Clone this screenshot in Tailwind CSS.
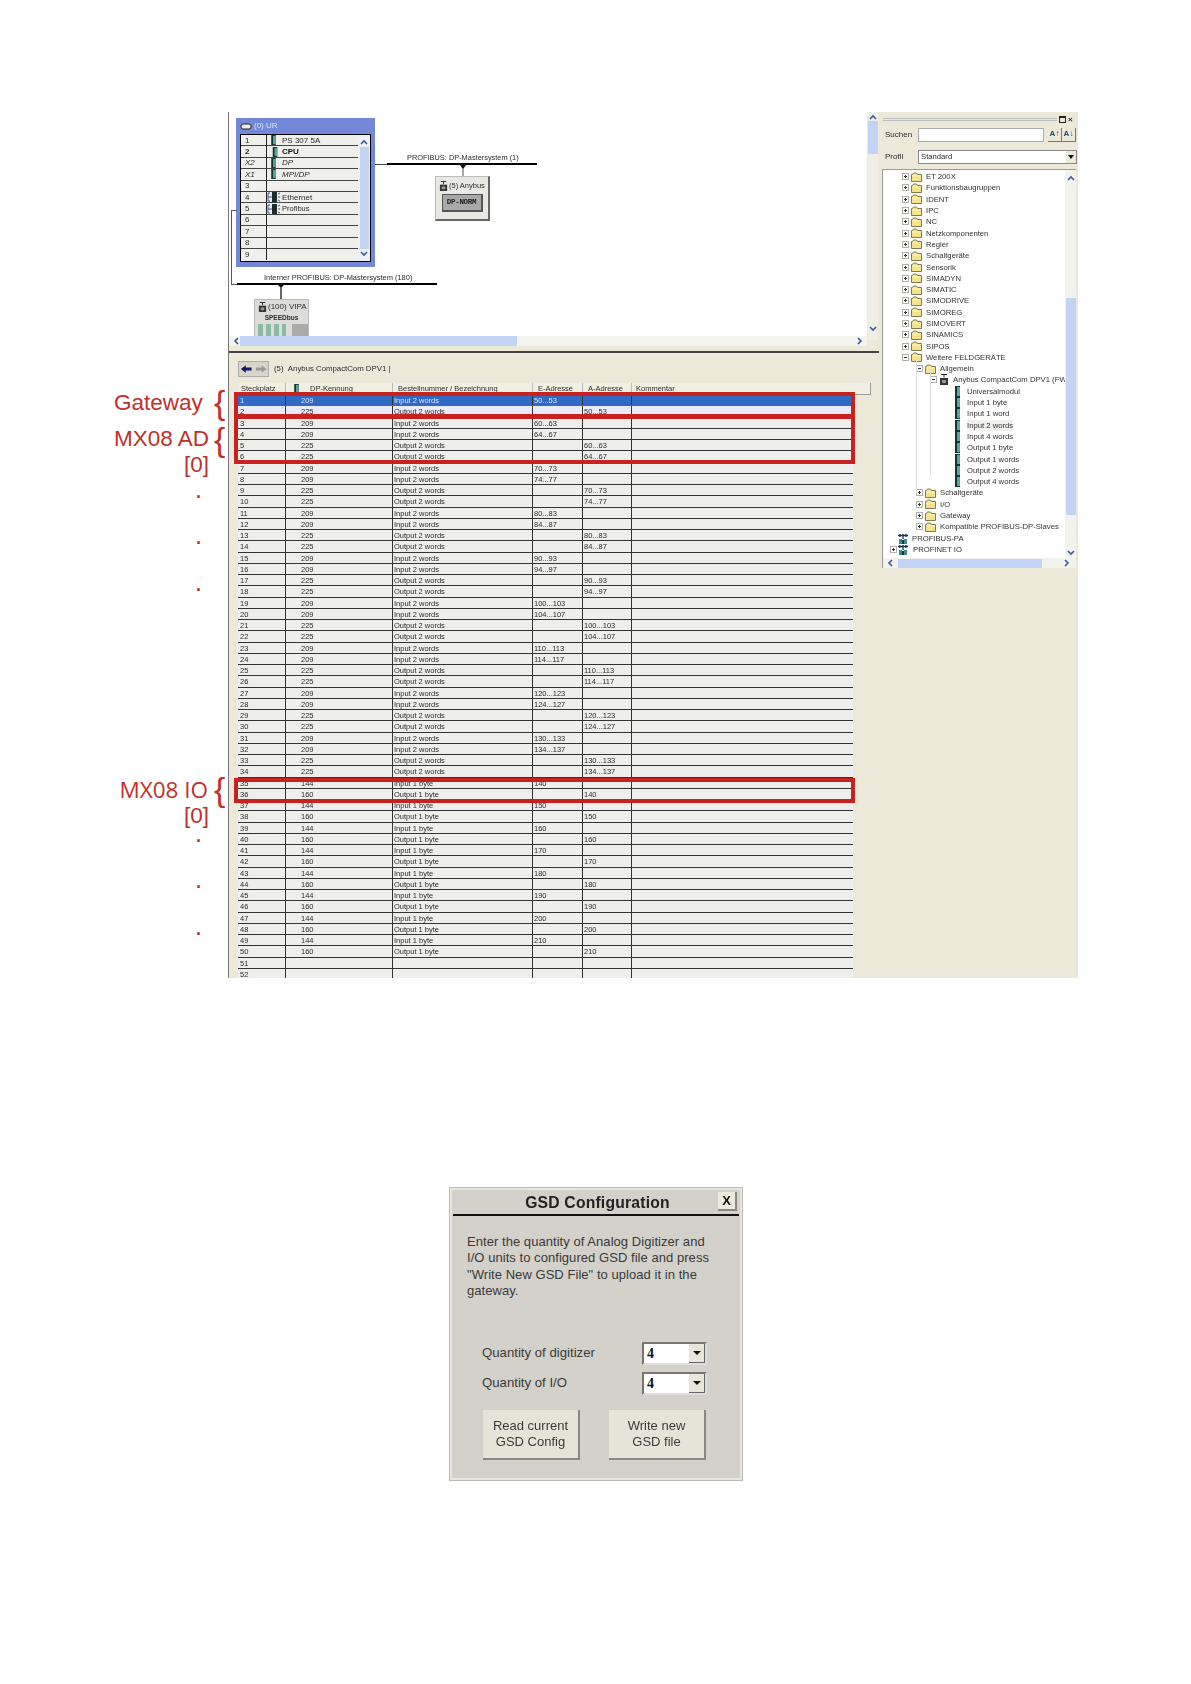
<!DOCTYPE html>
<html lang="de">
<head>
<meta charset="utf-8">
<title>GSD Configuration</title>
<script src="https://cdn.jsdelivr.net/npm/@tailwindcss/browser@4"></script>
</head>
<body class="bg-white">
<svg class="hidden" width="0" height="0">
  <symbol id="folder" viewBox="0 0 11 10"><path d="M.5 2.5h1l1-1.500h3l1 1.500h4v7h-10z" fill="#f4e38a" stroke="#7d7a55"/><path d="M1.500 4h8" stroke="#fdf6c4"/></symbol>
  <symbol id="plus" viewBox="0 0 7 7"><rect x=".5" y=".5" width="6" height="6" fill="#fff" stroke="#b0b0a8"/><path d="M2 3.500h3M3.500 2v3" stroke="#333"/></symbol>
  <symbol id="minus" viewBox="0 0 7 7"><rect x=".5" y=".5" width="6" height="6" fill="#fff" stroke="#b0b0a8"/><path d="M2 3.500h3" stroke="#333"/></symbol>
  <symbol id="module" viewBox="0 0 5 11"><rect width="5" height="11" fill="#123533"/><rect x="2" y="1" width="3" height="9" fill="#5da596"/></symbol>
  <symbol id="port" viewBox="0 0 14 10"><path d="M3 1H1v8h2M1 5h4" fill="none" stroke="#3a57a8"/><rect x="5" width="5" height="10" fill="#1c2b30"/><path d="M11 2l2-1M11 5h2M11 8l2 1" stroke="#555"/></symbol>
  <symbol id="slave" viewBox="0 0 10 11"><path d="M2 .5h6M5 .5v3" stroke="#222"/><rect x="1" y="4" width="8" height="7" fill="#333"/><rect x="3" y="6" width="4" height="3" fill="#999"/></symbol>
  <symbol id="net" viewBox="0 0 10 11"><path d="M0 2.500h10M2 1v3M5 1v3M8 1v3M5 4v2" stroke="#16325c" stroke-width="1.300"/><rect x="1" y="6" width="3" height="5" fill="#3a8f80"/><rect x="6" y="6" width="3" height="5" fill="#3a8f80"/><rect x="4" y="7" width="2" height="4" fill="#1c2f52"/></symbol>
  <symbol id="up" viewBox="0 0 8 6"><path d="M1 5l3-3 3 3" fill="none" stroke="#3d5a9c" stroke-width="1.600"/></symbol>
  <symbol id="down" viewBox="0 0 8 6"><path d="M1 1l3 3 3-3" fill="none" stroke="#3d5a9c" stroke-width="1.600"/></symbol>
  <symbol id="left" viewBox="0 0 6 8"><path d="M5 1L2 4l3 3" fill="none" stroke="#3d5a9c" stroke-width="1.600"/></symbol>
  <symbol id="right" viewBox="0 0 6 8"><path d="M1 1l3 3-3 3" fill="none" stroke="#3d5a9c" stroke-width="1.600"/></symbol>
</svg>

<div class="relative w-[1191px] h-[1684px] pt-[112px] overflow-hidden font-['Liberation_Sans',Arial,sans-serif]">

  <!-- screenshot -->
  <div class="relative ml-[228px] w-[850px] h-[866px] flex bg-[#ece9d8] border-l border-[#777] overflow-hidden blur-[0.45px] text-[#2c2c2c]">
    <div class="w-[650px] shrink-0 flex flex-col">
      <div class="h-[239px] shrink-0 flex">
        <div class="w-[638px] shrink-0 flex flex-col">
          <!-- diagram canvas -->
          <div class="relative h-[224px] bg-white overflow-hidden">
            <div class="absolute left-[7px] top-[6px] w-[139px] h-[149px] bg-[#7488d8] flex flex-col px-[4px] pb-[5px]">
              <div class="h-[16px] flex items-center gap-[2px] text-[8px] text-[#dfe5ff]">
                <svg width="12" height="7" viewBox="0 0 12 7"><rect x="1" y="1" width="10" height="5" rx="2" fill="#eee" stroke="#223"/></svg><span>(0) UR</span>
              </div>
              <div class="relative flex-1 bg-[#efefec] border border-black flex flex-col text-[8px] leading-[11px] overflow-hidden [&>div]:h-[11.400px] [&>div]:shrink-0 [&>div]:flex [&>div]:items-center [&>div]:border-b [&>div]:border-[#444] [&_b]:w-[26px] [&_b]:shrink-0 [&_b]:pl-[4px] [&_b]:font-normal [&_b]:border-r [&_b]:border-[#222] [&_svg]:ml-[4px] [&_svg]:mr-[6px]">
                <div><b>1</b><svg width="5" height="10"><use href="#module"/></svg><span>PS 307 5A</span></div>
                <div class="font-bold"><b class="!font-bold">2</b><svg width="8" height="10"><use href="#module"/></svg><span class="-ml-[3px] text-[#111]">CPU</span></div>
                <div class="italic"><b>X2</b><svg width="5" height="10"><use href="#module"/></svg><span>DP</span></div>
                <div class="italic"><b>X1</b><svg width="5" height="10"><use href="#module"/></svg><span>MPI/DP</span></div>
                <div><b>3</b></div>
                <div><b>4</b><svg class="!ml-0 !mr-[1px]" width="14" height="10"><use href="#port"/></svg><span>Ethernet</span></div>
                <div class="text-[7.500px]"><b class="text-[8px]">5</b><svg class="!ml-0 !mr-[1px]" width="14" height="10"><use href="#port"/></svg><span>Profibus</span></div>
                <div><b>6</b></div><div><b>7</b></div><div><b>8</b></div><div class="!border-b-0"><b>9</b></div>
                <div class="!absolute right-0 top-0 bottom-0 w-[12px] !h-auto !border-b-0 !flex-col !items-center !justify-between bg-[#eef0f5] py-[4px]">
                  <svg class="!m-0" width="8" height="6"><use href="#up"/></svg>
                  <span class="w-[9px] flex-1 my-[2px] bg-[#c3d3f2]"></span>
                  <svg class="!m-0" width="8" height="6"><use href="#down"/></svg>
                </div>
              </div>
            </div>

            <!-- Profibus master system -->
            <span class="absolute left-[146px] top-[52px] w-[12px] h-px bg-[#444]"></span>
            <span class="absolute left-[158px] top-[51px] w-[150px] h-[2px] bg-black"></span>
            <span class="absolute left-[178px] top-[41px] text-[7.400px] leading-[10px] whitespace-nowrap">PROFIBUS: DP-Mastersystem (1)</span>
            <svg class="absolute left-[229px] top-[52px]" width="10" height="13" viewBox="0 0 10 13"><path d="M1 0h8L5 5z" fill="#111"/><path d="M5 4v9" stroke="#555"/></svg>
            <div class="absolute left-[206px] top-[64px] w-[55px] h-[45px] bg-[#e8e8e4] border border-[#bbb] border-r-2 border-b-2 border-r-[#666] border-b-[#666] flex flex-col items-center">
              <div class="h-[17px] w-full flex items-center gap-[1px] pl-[3px] text-[7.500px]"><svg width="9" height="10"><use href="#slave"/></svg><span class="whitespace-nowrap">(5) Anybus</span></div>
              <div class="w-[41px] h-[18px] bg-[#a9a9a9] border border-[#555] border-r-2 border-b-2 flex items-center justify-center text-[7.500px] font-bold text-[#222] font-['Liberation_Mono',monospace] tracking-[-0.300px]">DP-NORM</div>
            </div>

            <!-- Internal profibus -->
            <span class="absolute left-[2px] top-[98px] w-[6px] h-px bg-[#555]"></span>
            <span class="absolute left-[2px] top-[98px] w-px h-[74px] bg-[#555]"></span>
            <span class="absolute left-[2px] top-[172px] w-[7px] h-px bg-[#555]"></span>
            <span class="absolute left-[8px] top-[171px] w-[200px] h-[2px] bg-black"></span>
            <span class="absolute left-[35px] top-[161px] text-[7.450px] leading-[10px] whitespace-nowrap">Interner PROFIBUS: DP-Mastersystem (180)</span>
            <svg class="absolute left-[47px] top-[172px]" width="10" height="15" viewBox="0 0 10 15"><path d="M1 0h8L5 4z" fill="#111"/><path d="M5 3v12" stroke="#666" stroke-width="2"/></svg>
            <div class="absolute left-[25px] top-[187px] w-[55px] h-[45px] bg-[#dcdcd8] border border-[#bbb] flex flex-col">
              <div class="h-[14px] flex items-center gap-[1px] pl-[3px] text-[8px]"><svg width="9" height="10"><use href="#slave"/></svg><span class="whitespace-nowrap">(100) VIPA</span></div>
              <div class="h-[7px] text-[6.500px] leading-[7px] text-center font-bold">SPEEDbus</div>
              <div class="flex-1 flex gap-[3px] pl-[3px] pt-[3px]">
                <span class="w-[5px] bg-[#8ab9a4]"></span><span class="w-[5px] bg-[#8ab9a4]"></span><span class="w-[5px] bg-[#8ab9a4]"></span><span class="w-[5px] bg-[#8ab9a4]"></span><span class="w-[16px] ml-[3px] bg-[#aaa]"></span>
              </div>
            </div>
          </div>
          <!-- horizontal scrollbar -->
          <div class="h-[10px] shrink-0 bg-[#f4f4ee] flex items-center pl-[4px] pr-[4px] relative z-10">
            <svg width="6" height="8"><use href="#left"/></svg>
            <span class="ml-[1px] h-[10px] w-[277px] bg-[#c3d3f5]"></span>
            <svg class="ml-auto" width="6" height="8"><use href="#right"/></svg>
          </div>
        </div>
        <!-- vertical scrollbar -->
        <div class="w-[10px] ml-[1px] shrink-0 h-[228px] bg-[#efefe8] flex flex-col items-center pt-[2px] pb-[8px]">
          <svg width="8" height="6"><use href="#up"/></svg>
          <span class="w-full h-[33px] mt-[1px] bg-[#c3d3f5]"></span>
          <svg class="mt-auto" width="8" height="6"><use href="#down"/></svg>
        </div>
      </div>

      <!-- lower panel -->
      <div class="flex-1 min-h-0 border-t-2 border-[#444] pl-[9px] pt-[8px] overflow-hidden">
        <div class="h-[16px] flex items-center text-[7.800px]">
          <div class="w-[31px] h-[16px] flex bg-[#d8d5c8] border border-[#aaa]">
            <svg class="flex-1" viewBox="0 0 15 14"><path d="M2 7l5-4v2.500h6v3H7V11z" fill="#11146e"/></svg>
            <svg class="flex-1" viewBox="0 0 15 14"><path d="M13 7L8 3v2.500H2v3h6V11z" fill="#999"/></svg>
          </div>
          <span class="ml-[5px]">(5)&nbsp;&nbsp;Anybus CompactCom DPV1 |</span>
        </div>
        <!-- table header -->
        <div class="mt-[6px] w-[633px] h-[12px] grid grid-cols-[48px_107px_140px_50px_49px_1fr] bg-[#f1efe2] border-r border-b border-[#999] text-[7.500px] leading-[12px] [&>span]:pl-[5px] [&>span]:border-r [&>span]:border-[#bbb]">
          <span class="!pl-[3px]">Steckplatz</span>
          <span class="flex items-center gap-[11px] !pl-[8px]"><svg width="5" height="10"><use href="#module"/></svg>DP-Kennung</span>
          <span>Bestellnummer / Bezeichnung</span>
          <span>E-Adresse</span>
          <span>A-Adresse</span>
          <span class="!border-r-0 !pl-[4px]">Kommentar</span>
        </div>
        <!-- table rows -->
        <div class="w-[615px] text-[7.500px] leading-[11px] [&>div]:grid [&>div]:grid-cols-[48px_107px_140px_50px_49px_1fr] [&>div]:h-[11.260px] [&>div]:bg-[#eeeeec] [&>div]:border-b [&>div]:border-[#333] [&>div>span]:border-r [&>div>span]:border-[#333] [&>div>span]:pl-[1px] [&>div>span:first-child]:pl-[2px] [&>div>span:nth-child(2)]:pl-[15px] [&>div>span]:whitespace-nowrap [&>div>span]:overflow-hidden">
          <div class="!bg-[#316ac5] text-[#dbe6ff] !border-[#316ac5]"><span>1</span><span>209</span><span>Input 2 words</span><span>50...53</span><span></span></div>
          <div class="!bg-[#ebebf7]"><span>2</span><span>225</span><span>Output 2 words</span><span></span><span>50...53</span></div>
          <div><span>3</span><span>209</span><span>Input 2 words</span><span>60...63</span><span></span></div>
          <div><span>4</span><span>209</span><span>Input 2 words</span><span>64...67</span><span></span></div>
          <div><span>5</span><span>225</span><span>Output 2 words</span><span></span><span>60...63</span></div>
          <div><span>6</span><span>225</span><span>Output 2 words</span><span></span><span>64...67</span></div>
          <div><span>7</span><span>209</span><span>Input 2 words</span><span>70...73</span><span></span></div>
          <div><span>8</span><span>209</span><span>Input 2 words</span><span>74...77</span><span></span></div>
          <div><span>9</span><span>225</span><span>Output 2 words</span><span></span><span>70...73</span></div>
          <div><span>10</span><span>225</span><span>Output 2 words</span><span></span><span>74...77</span></div>
          <div><span>11</span><span>209</span><span>Input 2 words</span><span>80...83</span><span></span></div>
          <div><span>12</span><span>209</span><span>Input 2 words</span><span>84...87</span><span></span></div>
          <div><span>13</span><span>225</span><span>Output 2 words</span><span></span><span>80...83</span></div>
          <div><span>14</span><span>225</span><span>Output 2 words</span><span></span><span>84...87</span></div>
          <div><span>15</span><span>209</span><span>Input 2 words</span><span>90...93</span><span></span></div>
          <div><span>16</span><span>209</span><span>Input 2 words</span><span>94...97</span><span></span></div>
          <div><span>17</span><span>225</span><span>Output 2 words</span><span></span><span>90...93</span></div>
          <div><span>18</span><span>225</span><span>Output 2 words</span><span></span><span>94...97</span></div>
          <div><span>19</span><span>209</span><span>Input 2 words</span><span>100...103</span><span></span></div>
          <div><span>20</span><span>209</span><span>Input 2 words</span><span>104...107</span><span></span></div>
          <div><span>21</span><span>225</span><span>Output 2 words</span><span></span><span>100...103</span></div>
          <div><span>22</span><span>225</span><span>Output 2 words</span><span></span><span>104...107</span></div>
          <div><span>23</span><span>209</span><span>Input 2 words</span><span>110...113</span><span></span></div>
          <div><span>24</span><span>209</span><span>Input 2 words</span><span>114...117</span><span></span></div>
          <div><span>25</span><span>225</span><span>Output 2 words</span><span></span><span>110...113</span></div>
          <div><span>26</span><span>225</span><span>Output 2 words</span><span></span><span>114...117</span></div>
          <div><span>27</span><span>209</span><span>Input 2 words</span><span>120...123</span><span></span></div>
          <div><span>28</span><span>209</span><span>Input 2 words</span><span>124...127</span><span></span></div>
          <div><span>29</span><span>225</span><span>Output 2 words</span><span></span><span>120...123</span></div>
          <div><span>30</span><span>225</span><span>Output 2 words</span><span></span><span>124...127</span></div>
          <div><span>31</span><span>209</span><span>Input 2 words</span><span>130...133</span><span></span></div>
          <div><span>32</span><span>209</span><span>Input 2 words</span><span>134...137</span><span></span></div>
          <div><span>33</span><span>225</span><span>Output 2 words</span><span></span><span>130...133</span></div>
          <div><span>34</span><span>225</span><span>Output 2 words</span><span></span><span>134...137</span></div>
          <div><span>35</span><span>144</span><span>Input 1 byte</span><span>140</span><span></span></div>
          <div><span>36</span><span>160</span><span>Output 1 byte</span><span></span><span>140</span></div>
          <div><span>37</span><span>144</span><span>Input 1 byte</span><span>150</span><span></span></div>
          <div><span>38</span><span>160</span><span>Output 1 byte</span><span></span><span>150</span></div>
          <div><span>39</span><span>144</span><span>Input 1 byte</span><span>160</span><span></span></div>
          <div><span>40</span><span>160</span><span>Output 1 byte</span><span></span><span>160</span></div>
          <div><span>41</span><span>144</span><span>Input 1 byte</span><span>170</span><span></span></div>
          <div><span>42</span><span>160</span><span>Output 1 byte</span><span></span><span>170</span></div>
          <div><span>43</span><span>144</span><span>Input 1 byte</span><span>180</span><span></span></div>
          <div><span>44</span><span>160</span><span>Output 1 byte</span><span></span><span>180</span></div>
          <div><span>45</span><span>144</span><span>Input 1 byte</span><span>190</span><span></span></div>
          <div><span>46</span><span>160</span><span>Output 1 byte</span><span></span><span>190</span></div>
          <div><span>47</span><span>144</span><span>Input 1 byte</span><span>200</span><span></span></div>
          <div><span>48</span><span>160</span><span>Output 1 byte</span><span></span><span>200</span></div>
          <div><span>49</span><span>144</span><span>Input 1 byte</span><span>210</span><span></span></div>
          <div><span>50</span><span>160</span><span>Output 1 byte</span><span></span><span>210</span></div>
          <div><span>51</span><span></span><span></span><span></span><span></span></div>
          <div><span>52</span><span></span><span></span><span></span><span></span></div>
        </div>
      </div>
    </div>

    <!-- right catalogue panel -->
    <div class="ml-[3px] w-[195px] shrink-0 flex flex-col text-[7.700px]">
      <div class="h-[13px] flex items-center gap-[2px] pl-[1px] pr-[1px] mt-[1px]">
        <span class="flex-1 h-[3px] border-y border-[#bbb]"></span>
        <span class="w-[7px] h-[7px] border border-[#222] border-t-2"></span>
        <span class="w-[8px] text-[8px] leading-[8px] font-bold">×</span>
      </div>
      <div class="h-[15px] mt-[1px] flex items-center pl-[3px]">
        <span class="w-[33px] text-[8px]">Suchen</span>
        <span class="w-[126px] h-[14px] bg-white border border-[#aaa]"></span>
        <span class="ml-[4px] w-[14px] h-[14px] border-r border-b border-[#777] text-[8px] font-bold text-[#1f4a66] flex items-center justify-center">A↑</span>
        <span class="w-[14px] h-[14px] border-r border-b border-[#777] text-[8px] font-bold text-[#1f4a66] flex items-center justify-center">A↓</span>
      </div>
      <div class="h-[14px] mt-[8px] flex items-center pl-[3px]">
        <span class="w-[33px] text-[8px]">Profil</span>
        <span class="w-[159px] h-[14px] bg-white border border-[#888] flex items-center pl-[2px]">Standard
          <span class="ml-auto w-[10px] h-[12px] flex items-center justify-center bg-[#ece9d8]"><svg width="6" height="4" viewBox="0 0 6 4"><path d="M0 0h6L3 4z" fill="#111"/></svg></span>
        </span>
      </div>
      <!-- tree -->
      <div class="relative mt-[5px] w-[194px] h-[399px] bg-white border-l border-t border-[#999] overflow-hidden">
        <span class="absolute left-[33px] top-[188px] w-px h-[135px] bg-[#ddd]"></span>
        <span class="absolute left-[47px] top-[200px] w-px h-[105px] bg-[#ddd]"></span>
        <div class="pt-[1px] leading-[11px] [&>div]:flex [&>div]:items-center [&>div]:h-[11.310px] [&>div]:whitespace-nowrap [&_svg]:shrink-0 text-[#333]">
          <div class="pl-[19px] gap-[2px]"><svg width="7" height="7"><use href="#plus"/></svg><svg width="11" height="10"><use href="#folder"/></svg><span class="ml-[2px]">ET 200X</span></div>
          <div class="pl-[19px] gap-[2px]"><svg width="7" height="7"><use href="#plus"/></svg><svg width="11" height="10"><use href="#folder"/></svg><span class="ml-[2px]">Funktionsbaugruppen</span></div>
          <div class="pl-[19px] gap-[2px]"><svg width="7" height="7"><use href="#plus"/></svg><svg width="11" height="10"><use href="#folder"/></svg><span class="ml-[2px]">IDENT</span></div>
          <div class="pl-[19px] gap-[2px]"><svg width="7" height="7"><use href="#plus"/></svg><svg width="11" height="10"><use href="#folder"/></svg><span class="ml-[2px]">IPC</span></div>
          <div class="pl-[19px] gap-[2px]"><svg width="7" height="7"><use href="#plus"/></svg><svg width="11" height="10"><use href="#folder"/></svg><span class="ml-[2px]">NC</span></div>
          <div class="pl-[19px] gap-[2px]"><svg width="7" height="7"><use href="#plus"/></svg><svg width="11" height="10"><use href="#folder"/></svg><span class="ml-[2px]">Netzkomponenten</span></div>
          <div class="pl-[19px] gap-[2px]"><svg width="7" height="7"><use href="#plus"/></svg><svg width="11" height="10"><use href="#folder"/></svg><span class="ml-[2px]">Regler</span></div>
          <div class="pl-[19px] gap-[2px]"><svg width="7" height="7"><use href="#plus"/></svg><svg width="11" height="10"><use href="#folder"/></svg><span class="ml-[2px]">Schaltgeräte</span></div>
          <div class="pl-[19px] gap-[2px]"><svg width="7" height="7"><use href="#plus"/></svg><svg width="11" height="10"><use href="#folder"/></svg><span class="ml-[2px]">Sensorik</span></div>
          <div class="pl-[19px] gap-[2px]"><svg width="7" height="7"><use href="#plus"/></svg><svg width="11" height="10"><use href="#folder"/></svg><span class="ml-[2px]">SIMADYN</span></div>
          <div class="pl-[19px] gap-[2px]"><svg width="7" height="7"><use href="#plus"/></svg><svg width="11" height="10"><use href="#folder"/></svg><span class="ml-[2px]">SIMATIC</span></div>
          <div class="pl-[19px] gap-[2px]"><svg width="7" height="7"><use href="#plus"/></svg><svg width="11" height="10"><use href="#folder"/></svg><span class="ml-[2px]">SIMODRIVE</span></div>
          <div class="pl-[19px] gap-[2px]"><svg width="7" height="7"><use href="#plus"/></svg><svg width="11" height="10"><use href="#folder"/></svg><span class="ml-[2px]">SIMOREG</span></div>
          <div class="pl-[19px] gap-[2px]"><svg width="7" height="7"><use href="#plus"/></svg><svg width="11" height="10"><use href="#folder"/></svg><span class="ml-[2px]">SIMOVERT</span></div>
          <div class="pl-[19px] gap-[2px]"><svg width="7" height="7"><use href="#plus"/></svg><svg width="11" height="10"><use href="#folder"/></svg><span class="ml-[2px]">SINAMICS</span></div>
          <div class="pl-[19px] gap-[2px]"><svg width="7" height="7"><use href="#plus"/></svg><svg width="11" height="10"><use href="#folder"/></svg><span class="ml-[2px]">SIPOS</span></div>
          <div class="pl-[19px] gap-[2px]"><svg width="7" height="7"><use href="#minus"/></svg><svg width="11" height="10"><use href="#folder"/></svg><span class="ml-[2px]">Weitere FELDGERÄTE</span></div>
          <div class="pl-[33px] gap-[2px]"><svg width="7" height="7"><use href="#minus"/></svg><svg width="11" height="10"><use href="#folder"/></svg><span class="ml-[2px]">Allgemein</span></div>
          <div class="pl-[47px] gap-[2px]"><svg width="7" height="7"><use href="#minus"/></svg><svg width="10" height="11"><use href="#slave"/></svg><span class="ml-[2px]">Anybus CompactCom DPV1 (FW</span></div>
          <div class="pl-[72px]"><svg width="5" height="11"><use href="#module"/></svg><span class="ml-[7px]">Universalmodul</span></div>
          <div class="pl-[72px]"><svg width="5" height="11"><use href="#module"/></svg><span class="ml-[7px]">Input 1 byte</span></div>
          <div class="pl-[72px]"><svg width="5" height="11"><use href="#module"/></svg><span class="ml-[7px]">Input 1 word</span></div>
          <div class="pl-[72px]"><svg width="5" height="11"><use href="#module"/></svg><span class="ml-[7px] bg-[#f0f0ee]">Input 2 words</span></div>
          <div class="pl-[72px]"><svg width="5" height="11"><use href="#module"/></svg><span class="ml-[7px]">Input 4 words</span></div>
          <div class="pl-[72px]"><svg width="5" height="11"><use href="#module"/></svg><span class="ml-[7px]">Output 1 byte</span></div>
          <div class="pl-[72px]"><svg width="5" height="11"><use href="#module"/></svg><span class="ml-[7px]">Output 1 words</span></div>
          <div class="pl-[72px]"><svg width="5" height="11"><use href="#module"/></svg><span class="ml-[7px]">Output 2 words</span></div>
          <div class="pl-[72px]"><svg width="5" height="11"><use href="#module"/></svg><span class="ml-[7px]">Output 4 words</span></div>
          <div class="pl-[33px] gap-[2px]"><svg width="7" height="7"><use href="#plus"/></svg><svg width="11" height="10"><use href="#folder"/></svg><span class="ml-[2px]">Schaltgeräte</span></div>
          <div class="pl-[33px] gap-[2px]"><svg width="7" height="7"><use href="#plus"/></svg><svg width="11" height="10"><use href="#folder"/></svg><span class="ml-[2px]">I/O</span></div>
          <div class="pl-[33px] gap-[2px]"><svg width="7" height="7"><use href="#plus"/></svg><svg width="11" height="10"><use href="#folder"/></svg><span class="ml-[2px]">Gateway</span></div>
          <div class="pl-[33px] gap-[2px]"><svg width="7" height="7"><use href="#plus"/></svg><svg width="11" height="10"><use href="#folder"/></svg><span class="ml-[2px]">Kompatible PROFIBUS-DP-Slaves</span></div>
          <div class="pl-[15px]"><svg width="10" height="11"><use href="#net"/></svg><span class="ml-[4px]">PROFIBUS-PA</span></div>
          <div class="pl-[7px] gap-[1px]"><svg width="7" height="7"><use href="#plus"/></svg><svg width="10" height="11"><use href="#net"/></svg><span class="ml-[4px]">PROFINET IO</span></div>
        </div>
        <!-- tree scrollbars -->
        <div class="absolute right-0 top-0 bottom-[10px] w-[11px] bg-[#f3f3ee] flex flex-col items-center pt-[5px] pb-[2px]">
          <svg width="8" height="6"><use href="#up"/></svg>
          <span class="mt-[117px] w-[10px] h-[217px] bg-[#c3d3f5]"></span>
          <svg class="mt-auto" width="8" height="6"><use href="#down"/></svg>
        </div>
        <div class="absolute left-0 right-0 bottom-0 h-[10px] bg-[#f3f3ee] flex items-center pl-[4px] pr-[6px]">
          <svg width="6" height="8"><use href="#left"/></svg>
          <span class="ml-[5px] h-[9px] w-[144px] bg-[#c3d3f5]"></span>
          <svg class="ml-auto" width="6" height="8"><use href="#right"/></svg>
        </div>
      </div>
    </div>

    <!-- red highlight frames -->
    <span class="absolute left-[5px] top-[280px] w-[621px] h-[26px] border-4 border-[#c8221f]"></span>
    <span class="absolute left-[5px] top-[303px] w-[621px] h-[49px] border-4 border-[#c8221f]"></span>
    <span class="absolute left-[5px] top-[666px] w-[621px] h-[25px] border-4 border-[#c8221f]"></span>
  </div>

  <!-- annotations -->
  <div class="absolute left-[114px] top-[389px] text-[22.500px] leading-[28px] text-[#c0302c]">Gateway</div>
  <div class="absolute left-[214px] top-[382px] text-[34px] leading-[40px] text-[#c0302c]">{</div>
  <div class="absolute left-[113px] top-[425px] w-[96px] text-right text-[22.500px] leading-[28px] text-[#c0302c] whitespace-nowrap">MX08 AD</div>
  <div class="absolute left-[214px] top-[419px] text-[34px] leading-[40px] text-[#c0302c]">{</div>
  <div class="absolute left-[113px] top-[451px] w-[96px] text-right text-[22.500px] leading-[28px] text-[#c0302c]">[0]</div>
  <div class="absolute left-[196px] top-[484px] text-[18px] leading-[16px] font-bold text-[#c0302c]">.</div>
  <div class="absolute left-[196px] top-[530px] text-[18px] leading-[16px] font-bold text-[#c0302c]">.</div>
  <div class="absolute left-[196px] top-[577px] text-[18px] leading-[16px] font-bold text-[#c0302c]">.</div>
  <div class="absolute left-[112px] top-[776px] w-[96px] text-right text-[22.500px] leading-[28px] text-[#c0302c] whitespace-nowrap font-['Open_Sans',sans-serif]">MX08 IO</div>
  <div class="absolute left-[214px] top-[769px] text-[34px] leading-[40px] text-[#c0302c]">{</div>
  <div class="absolute left-[113px] top-[802px] w-[96px] text-right text-[22.500px] leading-[28px] text-[#c0302c]">[0]</div>
  <div class="absolute left-[196px] top-[828px] text-[18px] leading-[16px] font-bold text-[#c0302c]">.</div>
  <div class="absolute left-[196px] top-[874px] text-[18px] leading-[16px] font-bold text-[#c0302c]">.</div>
  <div class="absolute left-[196px] top-[921px] text-[18px] leading-[16px] font-bold text-[#c0302c]">.</div>

  <!-- GSD dialog -->
  <div class="mt-[210px] ml-[450px] w-[292px] h-[292px] bg-[#d3d1c9] border-2 border-[#e6e5de] outline outline-[#bdbcb4] flex flex-col text-[#3a3a3a] blur-[0.4px]">
    <div class="h-[25px] mt-[1px] mx-[1px] flex items-center justify-center relative border-b-2 border-[#111]">
      <span class="text-[15.700px] font-bold tracking-[0.200px] text-[#222] ml-[3px]">GSD Configuration</span>
      <span class="absolute right-[2px] top-[1px] w-[19px] h-[19px] bg-[#eceade] border-r-2 border-b-2 border-[#8a887e] flex items-center justify-center text-[13px] font-bold text-[#111]">X</span>
    </div>
    <p class="mt-[18px] ml-[15px] w-[262px] text-[13px] tracking-[0.050px] leading-[16.400px]">Enter the quantity of Analog Digitizer and<br>I/O units to configured GSD file and press<br>"Write New GSD File" to upload it in the<br>gateway.</p>
    <div class="mt-[42px] ml-[30px] w-[225px] flex items-center justify-between h-[23px]">
      <span class="text-[13.200px]">Quantity of digitizer</span>
      <span class="w-[65px] h-[23px] bg-white border-2 border-[#77756c] border-r-[#ddd] border-b-[#ddd] flex items-center pl-[3px] font-['Liberation_Serif',serif] font-bold text-[14px] text-[#111]">4
        <span class="ml-auto w-[16px] h-[19px] bg-[#e8e6da] border-r border-b border-[#666] flex items-center justify-center"><svg width="8" height="4" viewBox="0 0 8 4"><path d="M0 0h8L4 4z" fill="#111"/></svg></span>
      </span>
    </div>
    <div class="mt-[7px] ml-[30px] w-[225px] flex items-center justify-between h-[23px]">
      <span class="text-[13.200px]">Quantity of I/O</span>
      <span class="w-[65px] h-[23px] bg-white border-2 border-[#77756c] border-r-[#ddd] border-b-[#ddd] flex items-center pl-[3px] font-['Liberation_Serif',serif] font-bold text-[14px] text-[#111]">4
        <span class="ml-auto w-[16px] h-[19px] bg-[#e8e6da] border-r border-b border-[#666] flex items-center justify-center"><svg width="8" height="4" viewBox="0 0 8 4"><path d="M0 0h8L4 4z" fill="#111"/></svg></span>
      </span>
    </div>
    <div class="mt-[15px] ml-[31px] flex gap-[29px] text-[13px] leading-[16px] text-center">
      <span class="w-[97px] h-[50px] pt-[1px] bg-[#e6e4d8] border-r-2 border-b-2 border-[#8a887e] flex items-center justify-center">Read current<br>GSD Config</span>
      <span class="w-[97px] h-[50px] pt-[1px] bg-[#e6e4d8] border-r-2 border-b-2 border-[#8a887e] flex items-center justify-center">Write new<br>GSD file</span>
    </div>
  </div>
</div>
</body>
</html>
